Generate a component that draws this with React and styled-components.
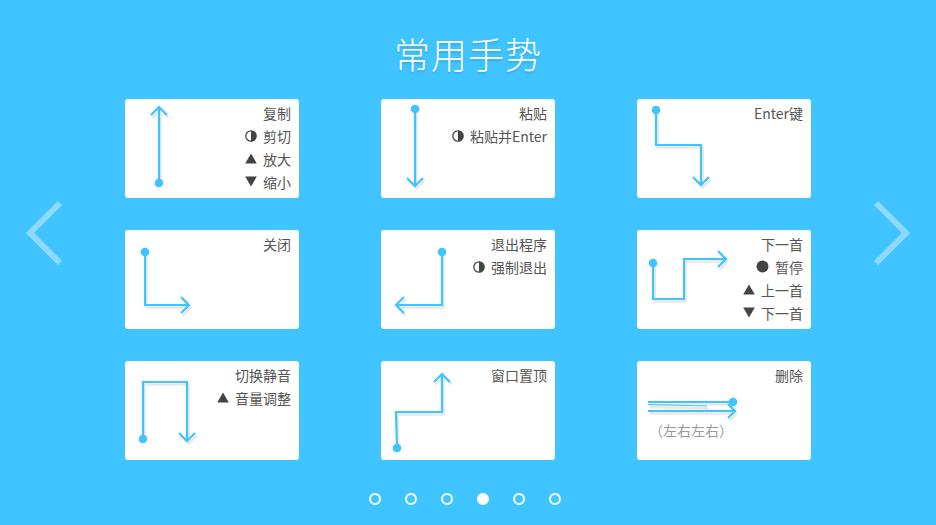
import React from "react";
import styled, { createGlobalStyle } from "styled-components";

const Global = createGlobalStyle`
  html, body { margin: 0; padding: 0; }
  body { background: #40c4ff; font-family: "Noto Sans CJK SC", "Noto Sans", sans-serif; }
`;

const Page = styled.div`
  width: 936px;
  height: 525px;
  background: #40c4ff;
  display: flex;
  flex-direction: column;
  align-items: center;
  overflow: hidden;
`;

const Title = styled.h1`
  margin: 0;
  padding-top: 28px;
  height: 71px;
  font-size: 36px;
  line-height: 50px;
  font-weight: 300;
  color: #ffffff;
  letter-spacing: 1px;
  text-shadow: 0 2px 2px rgba(0, 0, 0, 0.12);
`;

const Main = styled.div`
  display: flex;
  width: 936px;
`;

const Nav = styled.div`
  width: 125px;
  display: flex;
  justify-content: ${(p) => (p.$side === "left" ? "flex-start" : "flex-end")};
  padding: 100px 24px 0;
  box-sizing: border-box;
`;

const Grid = styled.div`
  display: grid;
  grid-template-columns: repeat(3, 174px);
  grid-auto-rows: 99px;
  column-gap: 82px;
  row-gap: 32px;
`;

const Card = styled.div`
  background: #ffffff;
  border-radius: 3px;
  display: grid;
  grid-template: 1fr / 1fr;
  overflow: hidden;
`;

const Layer = styled.div`
  grid-area: 1 / 1;
`;

const Lines = styled.div`
  grid-area: 1 / 1;
  display: flex;
  flex-direction: column;
  align-items: flex-end;
  padding: 2px 8px 0 0;
`;

const Line = styled.div`
  display: flex;
  align-items: center;
  gap: 6px;
  height: 23px;
  font-size: 14px;
  color: #555555;
  white-space: nowrap;
`;

const Note = styled.div`
  grid-area: 1 / 1;
  align-self: start;
  justify-self: start;
  margin: 59px 0 0 12px;
  font-size: 14px;
  line-height: 20px;
  color: #9a9a9a;
`;

const Dots = styled.div`
  display: flex;
  gap: 24px;
  margin: 33px 6px 0 0;
`;

const Dot = styled.span`
  width: 12px;
  height: 12px;
  box-sizing: border-box;
  border-radius: 50%;
  border: 2px solid #ffffff;
  background: ${(p) => (p.$active ? "#ffffff" : "transparent")};
`;

const BLUE = "#40c4ff";

const Icon = ({ type }) => {
  if (type === "half")
    return (
      <svg width="12" height="12" viewBox="0 0 12 12">
        <circle cx="6" cy="6" r="5.2" fill="none" stroke="#444" strokeWidth="1.3" />
        <path d="M6 0.8 A5.2 5.2 0 0 1 6 11.2 Z" fill="#444" />
      </svg>
    );
  if (type === "up")
    return (
      <svg width="12" height="11" viewBox="0 0 12 11">
        <path d="M6 0.5 L11.8 10.5 L0.2 10.5 Z" fill="#444" />
      </svg>
    );
  if (type === "down")
    return (
      <svg width="12" height="11" viewBox="0 0 12 11">
        <path d="M0.2 0.5 L11.8 0.5 L6 10.5 Z" fill="#444" />
      </svg>
    );
  if (type === "dot")
    return (
      <svg width="13" height="13" viewBox="0 0 13 13">
        <circle cx="6.5" cy="6.5" r="6" fill="#444" />
      </svg>
    );
  return null;
};

const Gesture = ({ path, head, dot, extra }) => (
  <svg width="174" height="99" viewBox="0 0 174 99">
    <g transform="translate(1.5 2.5)" fill="none" stroke="#e8e8e8" strokeWidth="2.6" strokeLinejoin="miter">
      <path d={path} />
      <path d={head} />
      {extra && <path d={extra} />}
    </g>
    <g fill="none" stroke={BLUE} strokeWidth="2.2" strokeLinejoin="miter">
      <path d={path} />
      <path d={head} />
      {extra && <path d={extra} strokeWidth="1.2" />}
    </g>
    <circle cx={dot[0]} cy={dot[1]} r="4.3" fill={BLUE} />
  </svg>
);

const cards = [
  {
    g: { path: "M34 84 L34 8", head: "M26 16 L34 8 L42 16", dot: [34, 84] },
    lines: [[null, "复制"], ["half", "剪切"], ["up", "放大"], ["down", "缩小"]],
  },
  {
    g: { path: "M34 10 L34 87", head: "M26 79 L34 87 L42 79", dot: [34, 10] },
    lines: [[null, "粘贴"], ["half", "粘贴并Enter"]],
  },
  {
    g: { path: "M19 11 L19 46 L64 46 L64 86", head: "M56 78 L64 86 L72 78", dot: [19, 11] },
    lines: [[null, "Enter键"]],
  },
  {
    g: { path: "M20 22 L20 75 L64 75", head: "M56 67 L64 75 L56 83", dot: [20, 22] },
    lines: [[null, "关闭"]],
  },
  {
    g: { path: "M61 22 L61 75 L15 75", head: "M23 67 L15 75 L23 83", dot: [61, 22] },
    lines: [[null, "退出程序"], ["half", "强制退出"]],
  },
  {
    g: { path: "M16 33 L16 69 L47 69 L47 29 L89 29", head: "M81 21 L89 29 L81 37", dot: [16, 33] },
    lines: [[null, "下一首"], ["dot", "暂停"], ["up", "上一首"], ["down", "下一首"]],
  },
  {
    g: { path: "M18 78 L18 21 L62 21 L62 80", head: "M54 72 L62 80 L70 72", dot: [18, 78] },
    lines: [[null, "切换静音"], ["up", "音量调整"]],
  },
  {
    g: { path: "M16 87 L15 51 L61 51 L61 13", head: "M53 21 L61 13 L69 21", dot: [16, 87] },
    lines: [[null, "窗口置顶"]],
  },
  {
    g: {
      path: "M96 41 L11 41 M11 50 L98 50",
      head: "M91 43 L98 50 L91 57",
      extra: "M11 43.5 L70 45",
      dot: [96, 41],
    },
    lines: [[null, "删除"]],
    note: "（左右左右）",
  },
];

const Chevron = ({ dir }) => (
  <svg width="42" height="72" viewBox="0 0 42 72">
    <path
      d={dir === "left" ? "M36 4 L6 34 L36 64" : "M6 4 L36 34 L6 64"}
      fill="none"
      stroke="#8ddafd"
      strokeWidth="6"
    />
  </svg>
);

export default function App() {
  return (
    <Page>
      <Global />
      <Title>常用手势</Title>
      <Main>
        <Nav $side="left">
          <Chevron dir="left" />
        </Nav>
        <Grid>
          {cards.map((c, i) => (
            <Card key={i}>
              <Layer>
                <Gesture {...c.g} />
              </Layer>
              <Lines>
                {c.lines.map(([icon, text], j) => (
                  <Line key={j}>
                    {icon && <Icon type={icon} />}
                    <span>{text}</span>
                  </Line>
                ))}
              </Lines>
              {c.note && <Note>{c.note}</Note>}
            </Card>
          ))}
        </Grid>
        <Nav $side="right">
          <Chevron dir="right" />
        </Nav>
      </Main>
      <Dots>
        {[0, 1, 2, 3, 4, 5].map((i) => (
          <Dot key={i} $active={i === 3} />
        ))}
      </Dots>
    </Page>
  );
}
